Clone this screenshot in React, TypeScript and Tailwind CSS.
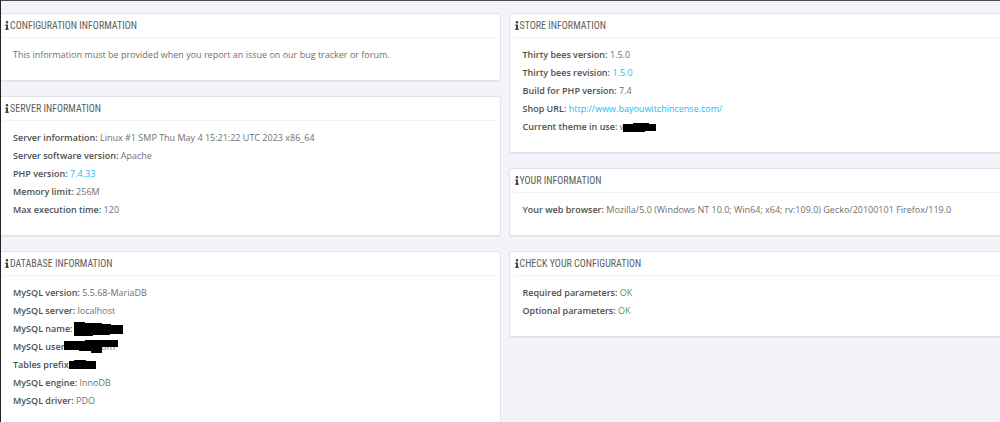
import type { ReactNode } from "react";
import { FaInfo } from "react-icons/fa";

function Panel({ title, children }: { title: string; children: ReactNode }) {
  return (
    <section className="rounded-[3px] border border-[#e4e2ee] bg-white px-[3px] shadow-[0_1px_1px_#e6e4ef]">
      <h3 className="flex h-6 items-center gap-px border-b border-[#f3f3f5] pl-0.5 font-['Roboto_Condensed',sans-serif] text-[10px] font-normal text-[#606060] uppercase">
        <FaInfo className="h-[9px] w-1 shrink-0 text-[#444]" aria-hidden="true" />
        {title}
      </h3>
      <div className="px-2.5 pt-2 pb-4">{children}</div>
    </section>
  );
}

function Row({ label, children }: { label: string; children: ReactNode }) {
  return (
    <p>
      <strong className="font-semibold text-[#505050]">{label}:</strong> {children}
    </p>
  );
}

// Black marker stroke laid over a private value
function Redaction({ className, width, points }: { className: string; width: number; points: string }) {
  return (
    <svg
      className={`absolute top-0 ${className}`}
      width={width}
      height="18"
      viewBox={`0 0 ${width} 18`}
      aria-hidden="true"
    >
      <polygon points={points} fill="#000" />
    </svg>
  );
}

export default function App() {
  return (
    <main className="h-screen overflow-hidden border-t border-l border-t-[#4b4650] border-l-[#222] bg-[#f4f3f9] font-['Open_Sans',sans-serif] text-[9px] leading-[18px] text-[#707070]">
      <div className="-mr-2.5 -ml-0.5 grid grid-cols-2 gap-x-2 pt-3">
        <div className="flex flex-col gap-[15px]">
          <Panel title="Configuration information">
            <p>This information must be provided when you report an issue on our bug tracker or forum.</p>
          </Panel>

          <Panel title="Server information">
            <Row label="Server information">Linux #1 SMP Thu May 4 15:21:22 UTC 2023 x86_64</Row>
            <Row label="Server software version">Apache</Row>
            <Row label="PHP version">
              <a href="#phpinfo" className="text-[#25b9f5]">7.4.33</a>
            </Row>
            <Row label="Memory limit">256M</Row>
            <Row label="Max execution time">120</Row>
          </Panel>

          <Panel title="Database information">
            <Row label="MySQL version">5.5.68-MariaDB</Row>
            <Row label="MySQL server">localhost</Row>
            <div className="relative">
              <Row label="MySQL name">{null}</Row>
              <Redaction
                className="left-[61px]"
                width={49}
                points="0,2 11,2 11,3 28,3 28,4 37,4 37,5 49,5 49,14 36,14 36,15 19,15 19,16 0,16"
              />
            </div>
            <div className="relative">
              <Row label="MySQL user">
                <span className="pl-8">om</span>
              </Row>
              <Redaction
                className="left-[51px]"
                width={54}
                points="0,3 21,3 21,2 54,2 54,9 38,9 38,15 27,15 27,13 15,13 15,12 0,12"
              />
            </div>
            <div className="relative">
              <Row label="Tables prefix">{null}</Row>
              <Redaction
                className="left-14"
                width={27}
                points="0,5 5,5 5,4 17,4 17,5 27,5 27,13 0,13"
              />
            </div>
            <Row label="MySQL engine">InnoDB</Row>
            <Row label="MySQL driver">PDO</Row>
          </Panel>
        </div>

        <div className="flex flex-col gap-[15px]">
          <Panel title="Store information">
            <Row label="Thirty bees version">1.5.0</Row>
            <Row label="Thirty bees revision">
              <a href="#revision" className="text-[#25b9f5]">1.5.0</a>
            </Row>
            <Row label="Build for PHP version">7.4</Row>
            <Row label="Shop URL">
              <a href="http://www.bayouwitchincense.com/" className="text-[#25b9f5]">
                http://www.bayouwitchincense.com/
              </a>
            </Row>
            <div className="relative">
              <Row label="Current theme in use">w</Row>
              <Redaction
                className="left-[100px]"
                width={33}
                points="0,6 10,6 10,5 26,5 26,6 33,6 33,13 22,13 22,14 0,14"
              />
            </div>
          </Panel>

          <Panel title="Your information">
            <Row label="Your web browser">
              Mozilla/5.0 (Windows NT 10.0; Win64; x64; rv:109.0) Gecko/20100101 Firefox/119.0
            </Row>
          </Panel>

          <Panel title="Check your configuration">
            <Row label="Required parameters">
              <span className="text-[#4f9a55]">OK</span>
            </Row>
            <Row label="Optional parameters">
              <span className="text-[#4f9a55]">OK</span>
            </Row>
          </Panel>
        </div>
      </div>
    </main>
  );
}
